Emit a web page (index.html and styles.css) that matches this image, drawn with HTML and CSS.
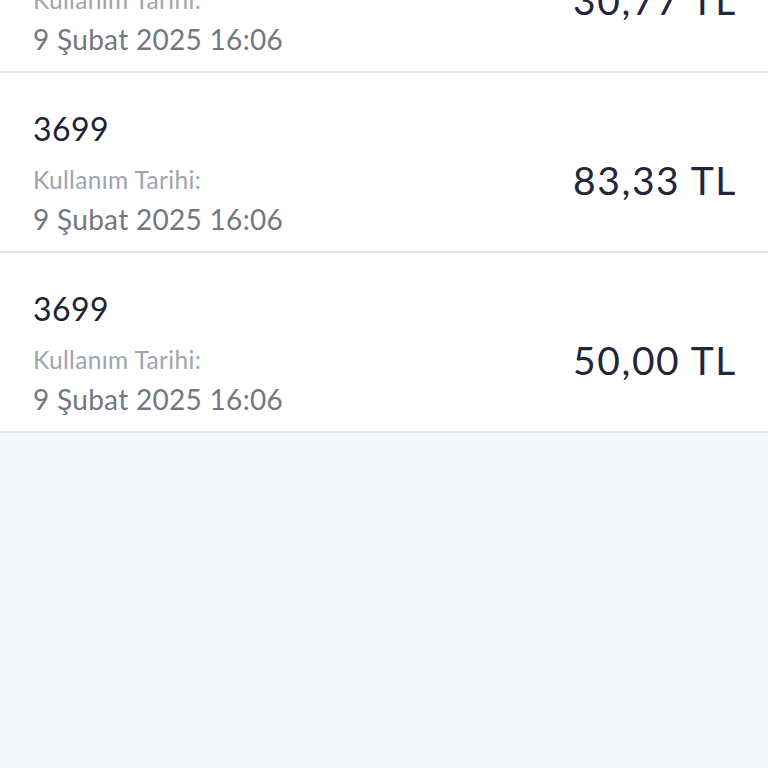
FILE: index.html
```html
<!DOCTYPE html>
<html lang="tr">
<head>
<meta charset="utf-8">
<title>Kullanımlar</title>
<link rel="stylesheet" href="styles.css">
</head>
<body>
<main class="list">
  <div class="row">
    <div class="info">
      <div class="code">3699</div>
      <div class="label">Kullanım Tarihi:</div>
      <div class="date">9 Şubat 2025 16:06</div>
    </div>
    <div class="amount">30,77 TL</div>
  </div>
  <div class="row">
    <div class="info">
      <div class="code">3699</div>
      <div class="label">Kullanım Tarihi:</div>
      <div class="date">9 Şubat 2025 16:06</div>
    </div>
    <div class="amount">83,33 TL</div>
  </div>
  <div class="row">
    <div class="info">
      <div class="code">3699</div>
      <div class="label">Kullanım Tarihi:</div>
      <div class="date">9 Şubat 2025 16:06</div>
    </div>
    <div class="amount">50,00 TL</div>
  </div>
</main>
</body>
</html>
```
FILE: styles.css
```css
html, body {
  margin: 0;
  padding: 0;
  background: #f6f7f9;
  font-family: Lato, "Open Sans", sans-serif;
}
.list {
  margin-top: -107px;
}
.row {
  display: flex;
  justify-content: space-between;
  align-items: flex-start;
  height: 178px;
  padding: 0 31px 0 33px;
  background: #ffffff;
  border-bottom: 2px solid #e4e6ea;
}
.info {
  padding-top: 36px;
}
.code {
  font-size: 32px;
  letter-spacing: 0.4px;
  line-height: 40px;
  color: #1f2233;
  margin-bottom: 11px;
}
.label {
  font-size: 24.5px;
  letter-spacing: 0.35px;
  line-height: 40px;
  color: #a0a4ad;
  margin-bottom: -1px;
}
.date {
  font-size: 28px;
  letter-spacing: 0.3px;
  line-height: 40px;
  color: #737781;
}
.amount {
  margin-top: 85px;
  font-size: 39px;
  letter-spacing: 1.6px;
  line-height: 44px;
  color: #23263a;
}
```
